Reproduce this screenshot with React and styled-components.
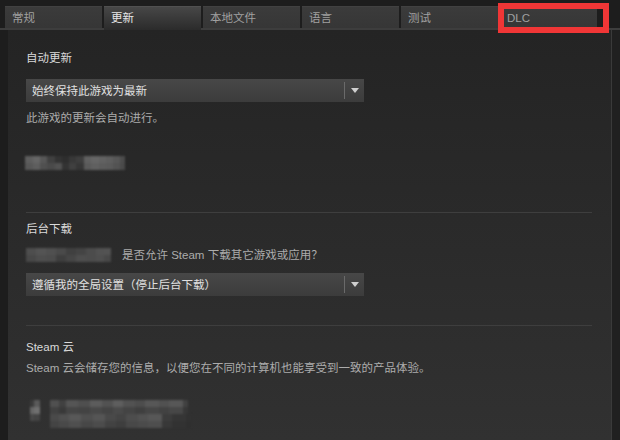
import React from "react";
import styled, { createGlobalStyle } from "styled-components";

const Global = createGlobalStyle`
  html, body { margin: 0; padding: 0; background: #1c1c1c; }
  body { font-family: Arial, "Liberation Sans", "Noto Sans CJK SC", sans-serif; }
`;

const Window = styled.div`
  position: relative;
  width: 620px;
  height: 440px;
  overflow: hidden;
  background: #1d1d1d;
  display: flex;
  flex-direction: column;
  font-size: 11.5px;
  line-height: 16px;
`;

const TabBar = styled.div`
  display: flex;
  align-items: flex-start;
  gap: 2px;
  padding: 6px 0 0 5px;
  height: 30px;
  box-sizing: border-box;
  border-bottom: 2px solid #3d3d3d;
`;

const Tab = styled.div`
  width: 97px;
  height: ${(p) => (p.$active ? "24px" : "22px")};
  box-sizing: border-box;
  padding: 3px 0 0 7px;
  color: ${(p) => (p.$active ? "#e6e6e6" : "#a0a0a0")};
  background: ${(p) =>
    p.$active
      ? "linear-gradient(#474747, #2b2b2b)"
      : "linear-gradient(#3b3b3b, #363636)"};
  border-top: 1px solid ${(p) => (p.$active ? "#505050" : "#414141")};
  z-index: ${(p) => (p.$active ? 1 : 0)};
`;

const Highlight = styled.div`
  position: absolute;
  left: 498px;
  top: 3px;
  width: 111px;
  height: 30px;
  box-sizing: border-box;
  border: 6px solid #f03636;
`;

const Body = styled.div`
  flex: 1;
  display: flex;
  padding-left: 8px;
`;

const Panel = styled.div`
  flex: 1;
  padding: 20px 20px 0 18px;
  background: linear-gradient(#242424, #313131);
  border-right: 8px solid #202020;
  box-shadow: inset -1px 0 0 #3a3a3a;
  display: flex;
  flex-direction: column;
`;

const Label = styled.div`
  color: #dadada;
  margin-top: ${(p) => p.$mt || 0}px;
`;

const Desc = styled.div`
  color: #acacac;
  margin-top: ${(p) => p.$mt || 0}px;
`;

const Select = styled.div`
  width: 338px;
  height: 23px;
  box-sizing: border-box;
  margin-top: ${(p) => p.$mt || 0}px;
  background: linear-gradient(#474747, #3c3c3c);
  display: flex;
  align-items: center;
  color: #e0e0e0;
  padding-left: 6px;
`;

const SelectText = styled.span`
  flex: 1;
`;

const SelectDivider = styled.span`
  width: 1px;
  height: 17px;
  background: #6a6a6a;
`;

const Arrow = styled.span`
  width: 19px;
  display: flex;
  justify-content: center;
  align-items: center;
`;

const Rule = styled.div`
  height: 1px;
  background: #3e3e3e;
  margin-top: ${(p) => p.$mt || 0}px;
`;

const Row = styled.div`
  display: flex;
  align-items: center;
  gap: 11px;
  margin-top: ${(p) => p.$mt || 0}px;
`;

const Mosaic = styled.div`
  display: flex;
  flex-direction: column;
  filter: blur(1px);
  margin-top: ${(p) => p.$mt || 0}px;
  margin-left: ${(p) => p.$ml || 0}px;
`;

const MosaicRow = styled.div`
  display: flex;
  height: ${(p) => p.$h}px;
`;

const Cell = styled.span`
  display: block;
  height: 100%;
`;

const CloudBlur = styled.div`
  display: flex;
  gap: 10px;
  margin-top: ${(p) => p.$mt || 0}px;
  margin-left: 4px;
`;

const Pix = ({ rows, h = 7, mt, ml }) => (
  <Mosaic $mt={mt} $ml={ml}>
    {rows.map((r, i) => (
      <MosaicRow key={i} $h={h}>
        {r.map(([w, c], j) => (
          <Cell key={j} style={{ width: w, background: c }} />
        ))}
      </MosaicRow>
    ))}
  </Mosaic>
);

const DropArrow = () => (
  <svg width="8" height="5" viewBox="0 0 8 5">
    <path d="M0 0 H8 L4 5 Z" fill="#cfcfcf" />
  </svg>
);

const Dropdown = ({ children, mt }) => (
  <Select $mt={mt}>
    <SelectText>{children}</SelectText>
    <SelectDivider />
    <Arrow>
      <DropArrow />
    </Arrow>
  </Select>
);

const blur1 = [
  [
    [8, "#5e5e5e"], [7, "#666"], [7, "#575757"], [8, "#404040"], [7, "#333"],
    [7, "#2e2e2e"], [7, "#383838"], [8, "#3e3e3e"], [7, "#606060"], [8, "#666"],
    [7, "#626262"], [7, "#5e5e5e"], [7, "#575757"], [5, "#4c4c4c"],
  ],
  [
    [8, "#575757"], [7, "#5e5e5e"], [7, "#505050"], [8, "#4a4a4a"], [7, "#525252"],
    [7, "#333"], [7, "#404040"], [8, "#363636"], [7, "#5a5a5a"], [8, "#606060"],
    [7, "#5c5c5c"], [7, "#5a5a5a"], [7, "#535353"], [5, "#4a4a4a"],
  ],
];

const blur2 = [
  [
    [10, "#4e4e4e"], [10, "#545454"], [10, "#505050"], [10, "#4a4a4a"], [10, "#404040"],
    [10, "#444"], [10, "#4c4c4c"], [8, "#525252"], [7, "#535353"],
  ],
  [
    [10, "#484848"], [10, "#4e4e4e"], [10, "#4c4c4c"], [10, "#3e3e3e"], [10, "#464646"],
    [10, "#4e4e4e"], [10, "#4c4c4c"], [8, "#4f4f4f"], [7, "#484848"],
  ],
];

const blurIcon = [
  [[4, "#3a3a3a"], [6, "#5a5a5a"]],
  [[4, "#666"], [6, "#707070"]],
  [[4, "#484848"], [6, "#444"]],
];

const blurLines = [
  [
    [9, "#505050"], [7, "#414141"], [12, "#555"], [12, "#4f4f4f"], [12, "#5c5c5c"],
    [11, "#525252"], [10, "#5e5e5e"], [12, "#525252"], [10, "#4d4d4d"], [14, "#575757"],
    [10, "#515151"], [14, "#575757"], [5, "#414141"],
  ],
  [
    [9, "#414141"], [7, "#393939"], [12, "#454545"], [12, "#434343"], [12, "#484848"],
    [11, "#444"], [10, "#4a4a4a"], [12, "#444"], [10, "#3f3f3f"], [14, "#464646"],
    [10, "#424242"], [14, "#474747"], [5, "#373737"],
  ],
  [
    [9, "#4a4a4a"], [10, "#505050"], [12, "#585858"], [12, "#4f4f4f"], [12, "#555"],
    [11, "#494949"], [10, "#444"], [12, "#4d4d4d"], [10, "#525252"], [14, "#575757"],
    [10, "#3c3c3c"], [14, "#353535"], [5, "#313131"],
  ],
  [
    [9, "#444"], [10, "#494949"], [12, "#4f4f4f"], [12, "#474747"], [12, "#4c4c4c"],
    [11, "#424242"], [10, "#3e3e3e"], [12, "#484848"], [10, "#4b4b4b"], [14, "#4e4e4e"],
    [10, "#383838"], [14, "#323232"], [5, "#2f2f2f"],
  ],
];

export default function App() {
  return (
    <Window>
      <Global />
      <TabBar>
        <Tab>常规</Tab>
        <Tab $active>更新</Tab>
        <Tab>本地文件</Tab>
        <Tab>语言</Tab>
        <Tab>测试</Tab>
        <Tab>DLC</Tab>
      </TabBar>
      <Highlight />
      <Body>
        <Panel>
          <Label>自动更新</Label>
          <Dropdown mt={13}>始终保持此游戏为最新</Dropdown>
          <Desc $mt={8}>此游戏的更新会自动进行。</Desc>
          <Pix rows={blur1} mt={30} ml={-1} />
          <Rule $mt={42} />
          <Label $mt={8}>后台下载</Label>
          <Row $mt={10}>
            <Pix rows={blur2} />
            <Desc>是否允许 Steam 下载其它游戏或应用？</Desc>
          </Row>
          <Dropdown mt={10}>遵循我的全局设置（停止后台下载）</Dropdown>
          <Rule $mt={29} />
          <Label $mt={13}>Steam 云</Label>
          <Desc $mt={5}>Steam 云会储存您的信息，以便您在不同的计算机也能享受到一致的产品体验。</Desc>
          <CloudBlur $mt={24}>
            <Pix rows={blurIcon} />
            <Pix rows={blurLines} />
          </CloudBlur>
        </Panel>
      </Body>
    </Window>
  );
}
